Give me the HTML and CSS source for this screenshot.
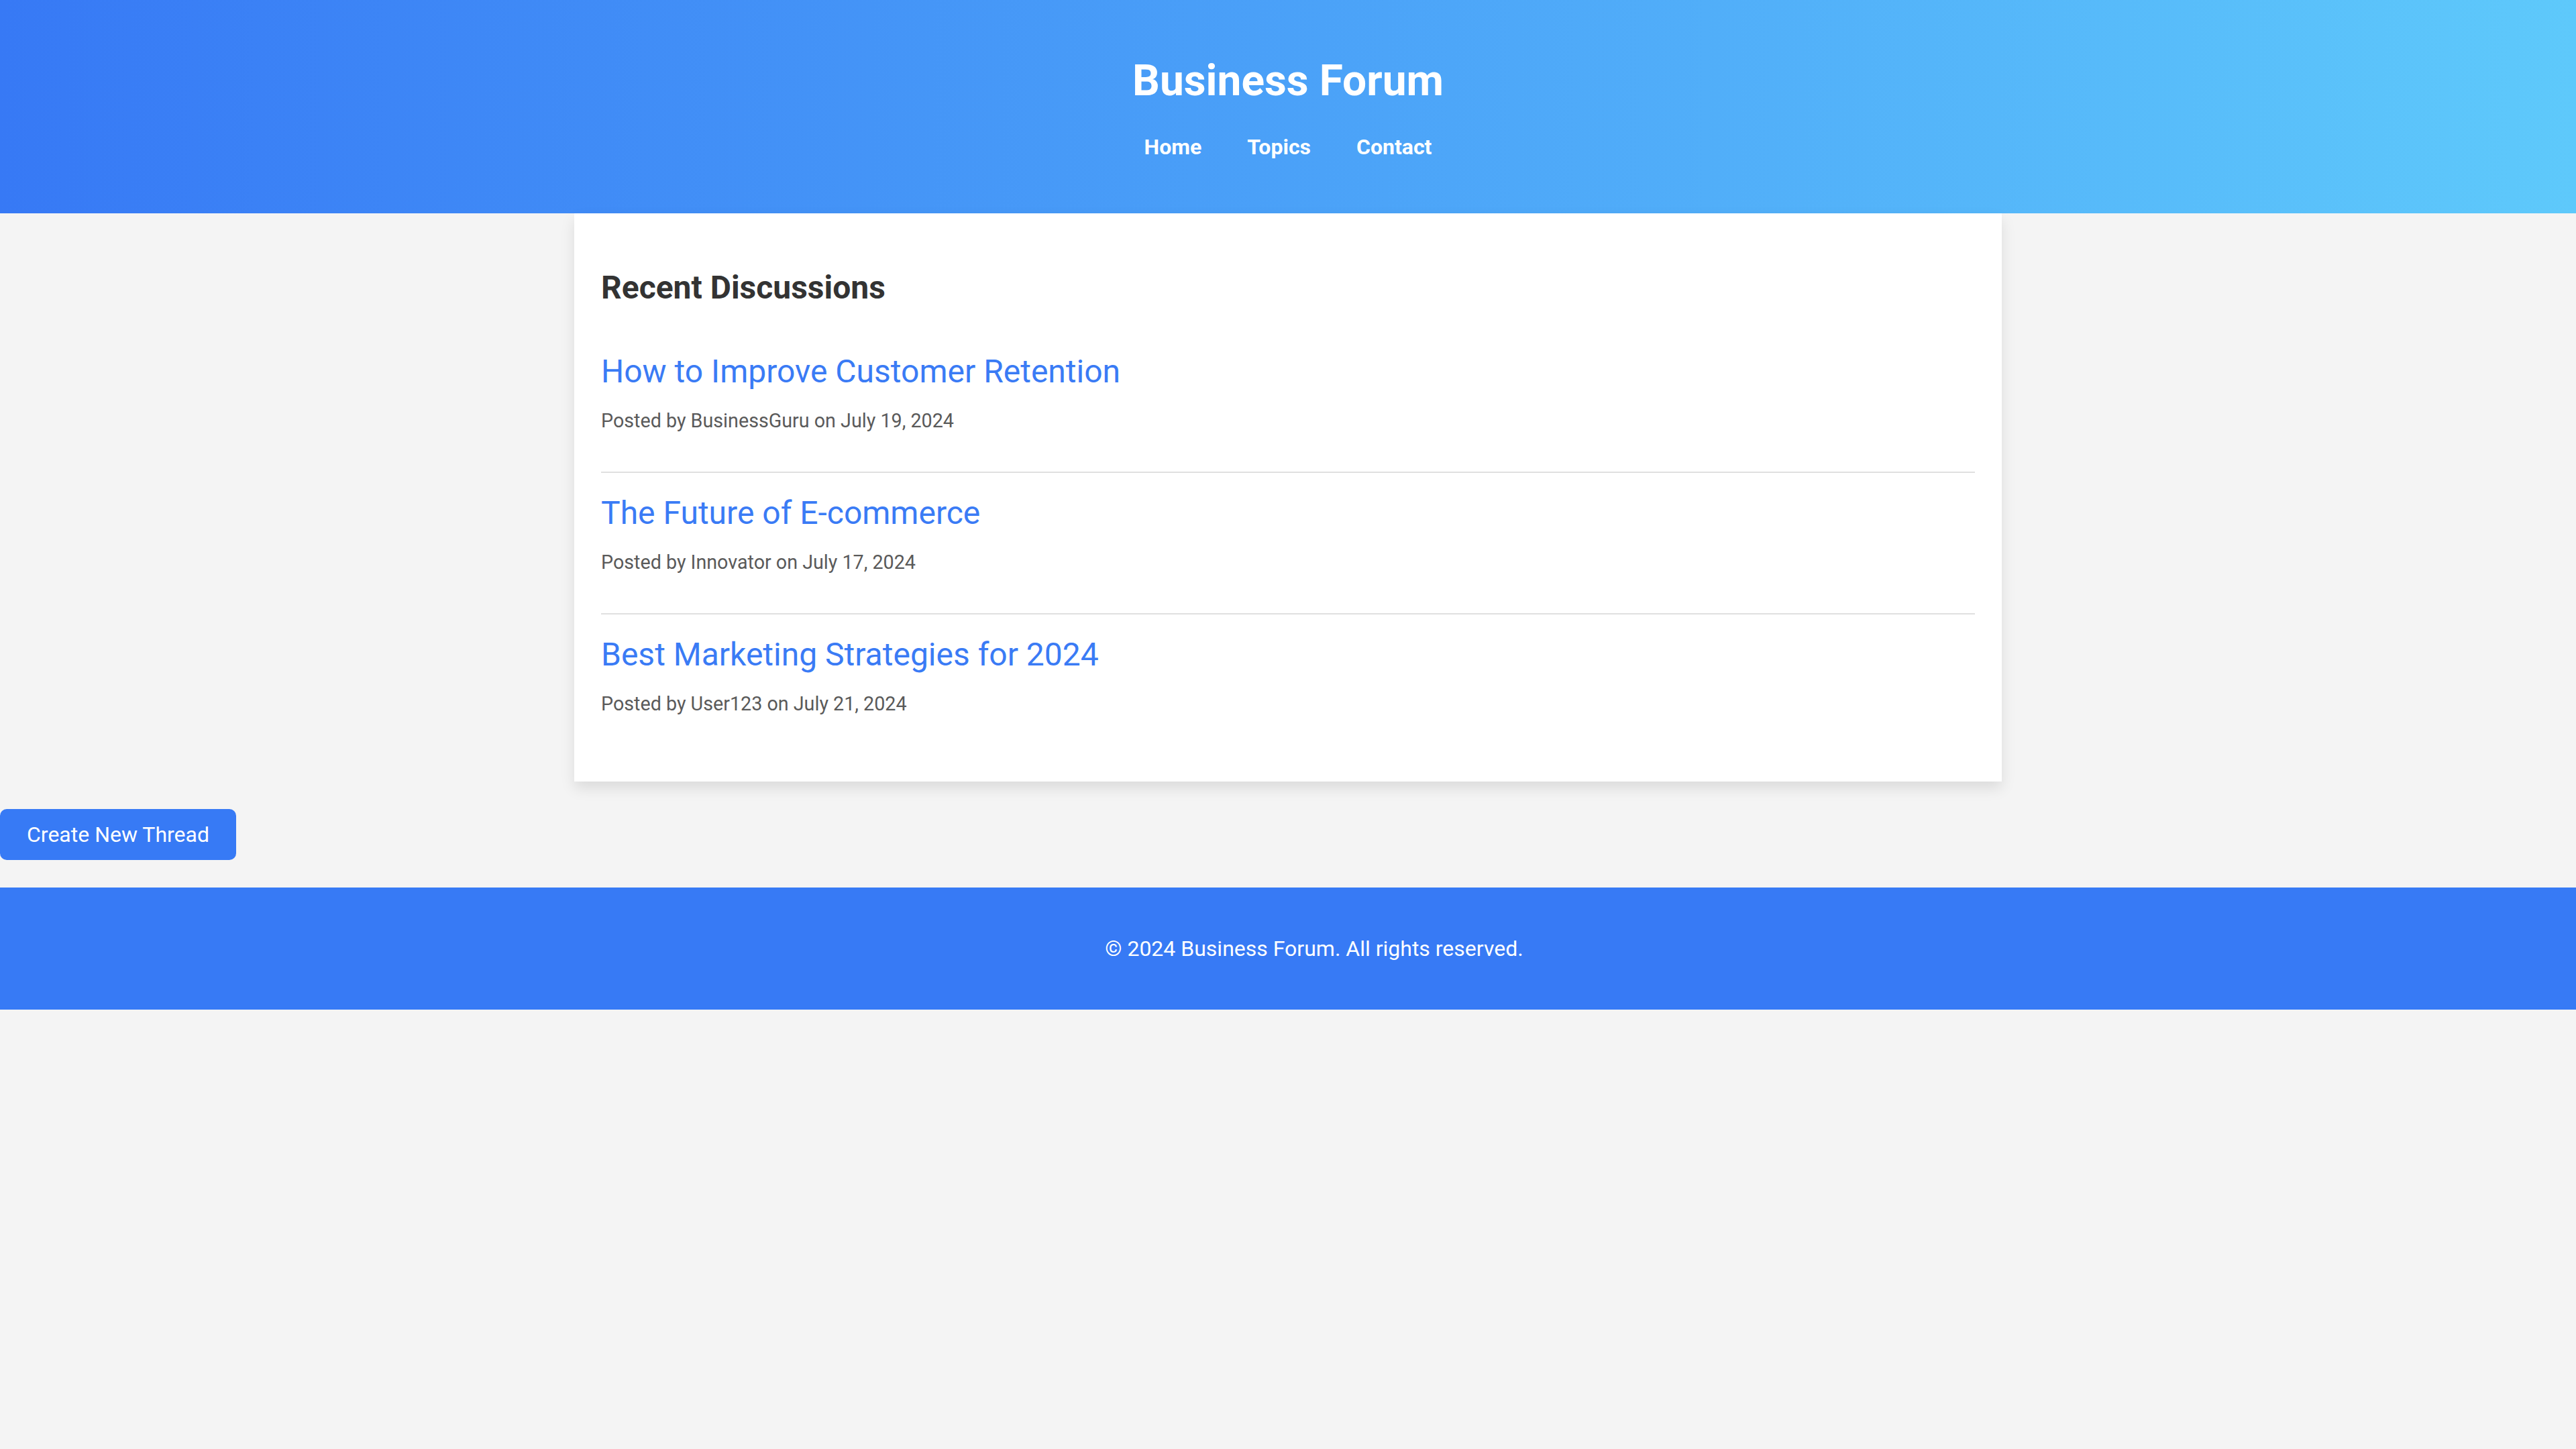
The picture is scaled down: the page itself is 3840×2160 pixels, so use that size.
FILE: index.html
```html
<!DOCTYPE html>
<html lang="en">
<head>
<meta charset="utf-8">
<title>Business Forum</title>
<link rel="stylesheet" href="styles.css">
</head>
<body>
<header class="site-header">
  <h1 class="site-title">Business Forum</h1>
  <nav class="site-nav">
    <a href="#">Home</a>
    <a href="#">Topics</a>
    <a href="#">Contact</a>
  </nav>
</header>
<main class="card">
  <h2 class="card-title">Recent Discussions</h2>
  <div class="thread">
    <a class="thread-title" href="#">How to Improve Customer Retention</a>
    <p class="thread-meta">Posted by BusinessGuru on July 19, 2024</p>
  </div>
  <div class="thread">
    <a class="thread-title" href="#">The Future of E-commerce</a>
    <p class="thread-meta">Posted by Innovator on July 17, 2024</p>
  </div>
  <div class="thread">
    <a class="thread-title" href="#">Best Marketing Strategies for 2024</a>
    <p class="thread-meta">Posted by User123 on July 21, 2024</p>
  </div>
</main>
<div class="actions">
  <button class="btn-create">Create New Thread</button>
</div>
<footer class="site-footer">
  <p>© 2024 Business Forum. All rights reserved.</p>
</footer>
</body>
</html>
```

FILE: styles.css
```css
* { box-sizing: border-box; }
body {
  margin: 0;
  background: #f4f4f4;
  font-family: Roboto, "Noto Sans", sans-serif;
  color: #333;
}
.site-header {
  height: 318px;
  background: linear-gradient(90deg, #3779f5 0%, #5ec9fb 100%);
  color: #fff;
  text-align: center;
  padding-top: 82px;
}
.site-title {
  margin: 0;
  font-size: 64px;
  line-height: 77px;
  font-weight: 700;
}
.site-nav {
  margin-top: 41px;
  display: flex;
  justify-content: center;
  gap: 68px;
}
.site-nav a {
  color: #fff;
  text-decoration: none;
  font-weight: 700;
  font-size: 32px;
  line-height: 38px;
}
.card {
  display: block;
  position: relative;
  width: 2128px;
  margin: 0 auto;
  background: #fff;
  padding: 40px 40px 40px;
  box-shadow: 0 10px 20px rgba(0,0,0,0.1);
}
.card-title {
  margin: 41px 0 36px;
  font-size: 48px;
  line-height: 59px;
  font-weight: 700;
  color: #333;
}
.thread {
  padding: 30px 0 58px;
  border-bottom: 2px solid #e0e0e0;
}
.thread:last-child { border-bottom: none; }
.thread-title {
  display: block;
  color: #3a7bf5;
  text-decoration: none;
  font-size: 48px;
  line-height: 59px;
}
.thread-meta {
  margin: 27px 0 0;
  font-size: 28.7px;
  line-height: 35px;
  color: #5a5a5a;
}
.actions {
  padding: 41px 0;
}
.btn-create {
  display: block;
  height: 76px;
  padding: 0 40px;
  border: none;
  border-radius: 10px;
  background: #377af5;
  color: #fff;
  font-family: Roboto, sans-serif;
  font-size: 32px;
  cursor: pointer;
}
.site-footer {
  height: 182px;
  padding-left: 78px;
  background: #377af5;
  color: #fff;
  display: flex;
  align-items: center;
  justify-content: center;
}
.site-footer p {
  margin: 0;
  font-size: 32px;
}
```
